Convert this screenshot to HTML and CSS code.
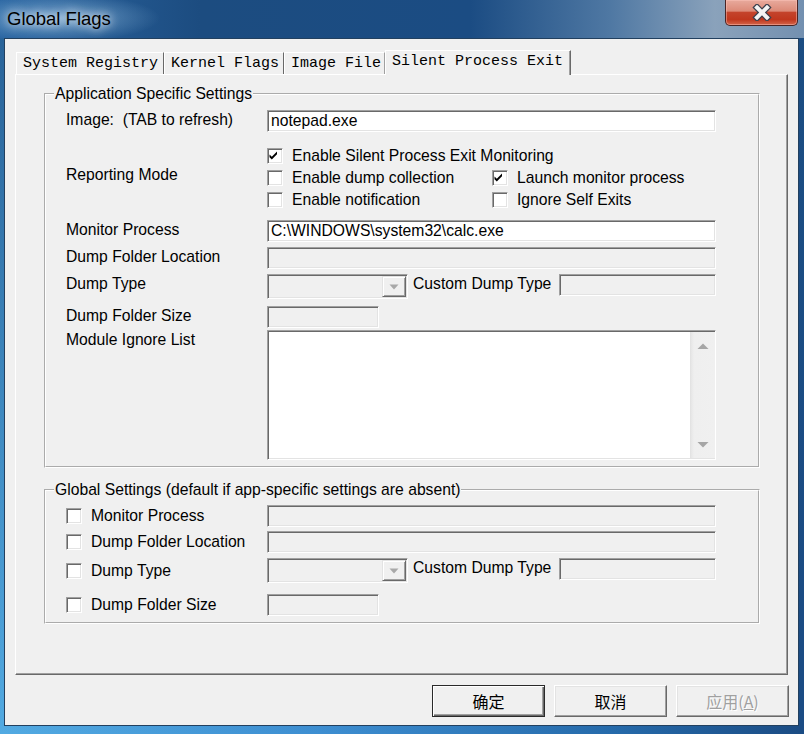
FILE: index.html
```html
<!DOCTYPE html>
<html lang="en">
<head>
<meta charset="utf-8">
<title>Global Flags</title>
<link rel="stylesheet" href="styles.css">
</head>
<body>
<div class="window">
  <header class="titlebar">
    <span class="title">Global Flags</span>
    <div class="close-btn">
      <svg width="20" height="17" viewBox="0 0 20 17"><path d="M5 3.5 L15 13.5 M15 3.5 L5 13.5" stroke="#3a3f4c" stroke-width="6.5" stroke-linecap="square"/><path d="M5 3.5 L15 13.5 M15 3.5 L5 13.5" stroke="#f4f4f4" stroke-width="4" stroke-linecap="square"/></svg>
    </div>
  </header>
  <div class="client">
    <nav class="tabs">
      <div class="tab tab-sysreg">System Registry</div>
      <div class="tab tab-kernel">Kernel Flags</div>
      <div class="tab tab-image">Image File</div>
      <div class="tab tab-active">Silent Process Exit</div>
    </nav>
    <section class="panel">
      <fieldset class="group group-app">
        <legend>Application Specific Settings</legend>
        <div class="rows rows-app">
          <div class="row">
            <span class="lbl lbl-image">Image:  (TAB to refresh)</span>
            <div class="edit edit-wide">notepad.exe</div>
          </div>
          <div class="row row-report">
            <span class="lbl lbl-report">Reporting Mode</span>
            <div class="checks">
              <div class="chk chk-span"><span class="box"><svg width="14" height="14" viewBox="0 0 14 14"><polygon points="1.5,5.5 3.8,7.8 9,2.5 9,5.3 3.8,10.5 1.5,8.2" fill="#000"/></svg></span>Enable Silent Process Exit Monitoring</div>
              <div class="chk"><span class="box"></span>Enable dump collection</div>
              <div class="chk"><span class="box"><svg width="14" height="14" viewBox="0 0 14 14"><polygon points="1.5,5.5 3.8,7.8 9,2.5 9,5.3 3.8,10.5 1.5,8.2" fill="#000"/></svg></span>Launch monitor process</div>
              <div class="chk"><span class="box"></span>Enable notification</div>
              <div class="chk"><span class="box"></span>Ignore Self Exits</div>
            </div>
          </div>
          <div class="row row-monitor">
            <span class="lbl">Monitor Process</span>
            <div class="edit edit-wide">C:\WINDOWS\system32\calc.exe</div>
          </div>
          <div class="row row-tight">
            <span class="lbl">Dump Folder Location</span>
            <div class="edit edit-wide is-disabled"></div>
          </div>
          <div class="row row-tight">
            <span class="lbl">Dump Type</span>
            <div class="dumptype">
              <div class="combo"><span class="drop"><svg width="10" height="6" viewBox="0 0 10 6"><polygon points="0.5,0.5 9.5,0.5 5,5.5" fill="#a8a8a8"/></svg></span></div>
              <span class="custom-lbl">Custom Dump Type</span>
              <div class="edit edit-custom is-disabled"></div>
            </div>
          </div>
          <div class="row row-size">
            <span class="lbl">Dump Folder Size</span>
            <div class="edit edit-size is-disabled"></div>
          </div>
          <div class="row row-module">
            <span class="lbl">Module Ignore List</span>
            <div class="listbox">
              <div class="list-body"></div>
              <div class="vscroll">
                <svg width="12" height="7" viewBox="0 0 12 7"><polygon points="6,0.5 11.5,6 0.5,6" fill="#a6a6a6"/></svg>
                <svg width="12" height="7" viewBox="0 0 12 7"><polygon points="0.5,1 11.5,1 6,6.5" fill="#a6a6a6"/></svg>
              </div>
            </div>
          </div>
        </div>
      </fieldset>
      <fieldset class="group group-global">
        <legend>Global Settings (default if app-specific settings are absent)</legend>
        <div class="rows rows-global">
          <div class="row">
            <div class="chk glbl"><span class="box"></span>Monitor Process</div>
            <div class="edit edit-wide is-disabled"></div>
          </div>
          <div class="row row-g2">
            <div class="chk glbl"><span class="box"></span>Dump Folder Location</div>
            <div class="edit edit-wide is-disabled"></div>
          </div>
          <div class="row row-g3">
            <div class="chk glbl"><span class="box"></span>Dump Type</div>
            <div class="dumptype">
              <div class="combo"><span class="drop"><svg width="10" height="6" viewBox="0 0 10 6"><polygon points="0.5,0.5 9.5,0.5 5,5.5" fill="#a8a8a8"/></svg></span></div>
              <span class="custom-lbl">Custom Dump Type</span>
              <div class="edit edit-custom is-disabled"></div>
            </div>
          </div>
          <div class="row row-g4">
            <div class="chk glbl"><span class="box"></span>Dump Folder Size</div>
            <div class="edit edit-size is-disabled"></div>
          </div>
        </div>
      </fieldset>
    </section>
    <div class="buttons">
      <button class="btn btn-default">确定</button>
      <button class="btn">取消</button>
      <button class="btn btn-disabled">应用(<u>A</u>)</button>
    </div>
  </div>
</div>
</body>
</html>
```
FILE: styles.css
```css
* { box-sizing: border-box; }
html, body { margin: 0; padding: 0; }
body {
  width: 804px;
  height: 734px;
  overflow: hidden;
  font-family: "Liberation Sans", Arial, sans-serif;
  font-size: 15.7px;
  color: #000;
  background-color: #2a66a4;
  background-image:
    linear-gradient(to bottom, rgba(28, 77, 130, 0.8) 0, rgba(28, 77, 130, 0) 100%),
    linear-gradient(to right, #52aae2 0, #3d8ed1 320px, #2569a9 620px, #1b4c84 800px);
}
.window {
  width: 804px;
  height: 734px;
  display: flex;
  flex-direction: column;
}

/* title bar */
.titlebar {
  height: 38px;
  flex: 0 0 38px;
  display: flex;
  justify-content: space-between;
  align-items: flex-start;
  padding-left: 7px;
  background:
    radial-gradient(ellipse 100px 24px at 60px 18px, rgba(165, 205, 235, 0.6), rgba(165, 205, 235, 0) 100%),
    linear-gradient(to right, #2c67a3 0, #1c4c80 200px, #1b4c83 470px, #4f78a3 610px, #8aa2bb 715px, #7390b0 804px);
}
.title {
  font-size: 18.5px;
  line-height: 37px;
  color: #000;
  text-shadow: 0 0 8px rgba(255, 255, 255, 0.9), 0 0 12px rgba(255, 255, 255, 0.6);
}
.close-btn {
  width: 73px;
  height: 26px;
  margin-right: 6px;
  border: 1px solid #4a2424;
  border-top: none;
  border-radius: 0 0 5px 5px;
  background: linear-gradient(to bottom, #e8aa9d 0%, #dc8a78 44%, #c4432b 50%, #c0371e 78%, #d4654a 100%);
  box-shadow: inset 0 0 0 1px rgba(255, 200, 190, 0.45);
  display: flex;
  align-items: center;
  justify-content: center;
}
.close-btn svg { display: block; }

/* client area */
.client {
  flex: 1;
  margin: 0 5px 8px 4px;
  border: 1px solid #22405f;
  background: #f0f0f0;
  display: flex;
  flex-direction: column;
  padding: 11px 10px 8px 10px;
}

/* tabs */
.tabs {
  display: flex;
  align-items: flex-end;
  height: 24px;
  flex: 0 0 24px;
  margin-left: 1px;
  font-family: "Liberation Mono", "Courier New", monospace;
  font-size: 15px;
  position: relative;
  z-index: 1;
}
.tab {
  height: 22px;
  line-height: 21px;
  padding-left: 6px;
  white-space: pre;
  border-top: 1px solid #fff;
  border-left: 1px solid #fff;
  border-right: 1px solid #696969;
  background: #f0f0f0;
}
.tab-sysreg { width: 148px; }
.tab-kernel { width: 120px; }
.tab-image { width: 101px; border-right-color: #a0a0a0; }
.tab-active {
  width: 186px;
  height: 25px;
  padding-bottom: 3px;
  margin-bottom: -1px;
  box-shadow: inset -1px 0 0 #a0a0a0;
}

/* panel */
.panel {
  flex: 1;
  border-top: 1px solid #fff;
  border-left: 1px solid #fff;
  border-right: 1px solid #696969;
  border-bottom: 1px solid #696969;
  box-shadow: inset -1px -1px 0 #a0a0a0;
  padding: 10px 0 0 28px;
}

/* group boxes */
.group {
  width: 716px;
  margin: 0;
  padding: 7px 0 6px 0;
  border: 2px groove #ffffff;
  min-width: 0;
}
.group legend {
  margin-left: 8px;
  padding: 0 1px;
  line-height: 18px;
}
.group-global {
  margin-top: 13px;
  padding-top: 6px;
}
.rows { display: flex; flex-direction: column; }
.rows-app { margin-left: 20px; }
.rows-global { margin-left: 20px; }
.row { display: flex; align-items: flex-start; }
.lbl {
  flex: 0 0 201px;
  line-height: 20px;
  white-space: pre;
}
.lbl-report { margin-top: 21px; }
.row-report { margin-top: 12px; }
.row-monitor { margin-top: 9px; }
.row-tight { margin-top: 5px; }
.row-size { margin-top: 7px; }
.row-module { margin-top: 2px; }
.row-g2 { margin-top: 4px; }
.row-g3 { margin-top: 5px; }
.row-g4 { margin-top: 11px; }
.rows-global .row { align-items: center; }

/* checkboxes */
.checks {
  display: grid;
  grid-template-columns: 225px 224px;
  grid-template-rows: 22px 22px 22px;
  padding-top: 1px;
}
.chk {
  display: flex;
  align-items: center;
  gap: 9px;
  line-height: 20px;
  white-space: nowrap;
}
.chk-span { grid-column: 1 / span 2; }
.glbl { flex: 0 0 201px; }
.box {
  width: 16px;
  height: 16px;
  flex: 0 0 16px;
  background: #fff;
  border: 1px solid;
  border-color: #a0a0a0 #fff #fff #a0a0a0;
  box-shadow: inset 1px 1px 0 #696969, inset -1px -1px 0 #e3e3e3;
}
.box svg { display: block; }

/* edits */
.edit {
  height: 22px;
  background: #fff;
  border: 1px solid;
  border-color: #a0a0a0 #fff #fff #a0a0a0;
  box-shadow: inset 1px 1px 0 #696969, inset -1px -1px 0 #e3e3e3;
  padding: 0 3px;
  line-height: 20px;
  white-space: nowrap;
}
.edit.is-disabled { background: #f0f0f0; }
.edit-wide { width: 449px; }
.edit-size { width: 112px; }
.edit-custom { width: 157px; margin-left: auto; }

/* dump type row */
.dumptype {
  width: 449px;
  display: flex;
  align-items: flex-start;
}
.combo {
  width: 141px;
  height: 25px;
  padding: 1px;
  background: #f0f0f0;
  border: 1px solid;
  border-color: #a0a0a0 #fff #fff #a0a0a0;
  box-shadow: inset 1px 1px 0 #696969, inset -1px -1px 0 #e3e3e3;
  display: flex;
  justify-content: flex-end;
}
.drop {
  width: 24px;
  height: 21px;
  background: #f0f0f0;
  border: 1px solid;
  border-color: #e3e3e3 #696969 #696969 #e3e3e3;
  box-shadow: inset 1px 1px 0 #fff, inset -1px -1px 0 #a0a0a0;
  display: flex;
  align-items: center;
  justify-content: center;
}
.drop svg { display: block; }
.custom-lbl {
  margin-left: 5px;
  line-height: 20px;
  white-space: nowrap;
}

/* list box */
.listbox {
  width: 449px;
  height: 130px;
  display: flex;
  background: #fff;
  border: 1px solid;
  border-color: #a0a0a0 #fff #fff #a0a0a0;
  box-shadow: inset 1px 1px 0 #696969, inset -1px -1px 0 #e3e3e3;
  padding: 1px 0 1px 1px;
}
.list-body { flex: 1; }
.vscroll {
  width: 25px;
  flex: 0 0 25px;
  background: linear-gradient(to right, #e6e6e6 0, #efefef 3px, #f0f0f0 100%);
  border-left: 1px solid #e3e3e3;
  display: flex;
  flex-direction: column;
  justify-content: space-between;
  align-items: center;
  padding: 11px 0 10px 0;
}
.vscroll svg { display: block; }

/* buttons */
.buttons {
  flex: 0 0 32px;
  height: 32px;
  margin-top: 10px;
  margin-right: -1px;
  display: flex;
  justify-content: flex-end;
  gap: 9px;
}
.btn {
  -webkit-appearance: none;
  appearance: none;
  width: 113px;
  height: 32px;
  padding: 0;
  margin: 0;
  font-family: "Noto Sans CJK SC", "Liberation Sans", sans-serif;
  font-size: 16px;
  line-height: 20px;
  color: #000;
  background: #f0f0f0;
  border: 1px solid;
  border-color: #fff #696969 #696969 #fff;
  box-shadow: inset -1px -1px 0 #a0a0a0, inset 1px 1px 0 #e3e3e3;
  display: flex;
  align-items: center;
  justify-content: center;
}
.btn-default {
  border: 1px solid #2a2a2a;
  box-shadow: inset 1px 1px 0 #fff, inset -1px -1px 0 #696969, inset -2px -2px 0 #a0a0a0;
}
.btn-disabled {
  color: #a0a0a0;
  text-shadow: 1px 1px 0 #fff;
}
```
